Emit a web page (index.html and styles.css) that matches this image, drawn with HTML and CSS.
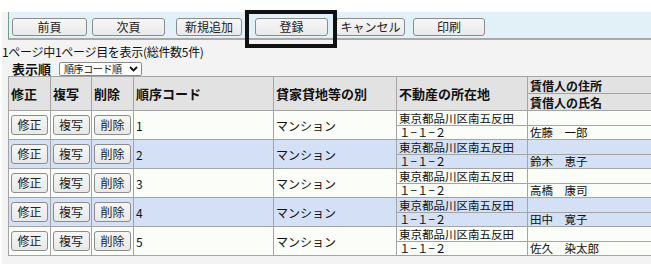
FILE: index.html
```html
<!DOCTYPE html>
<html lang="ja">
<head>
    <meta charset="UTF-8">
    <meta name="viewport" content="width=device-width, initial-scale=1.0">
    <link rel="stylesheet" href="styles.css">
    <title>貸家貸地一覧</title>
</head>
<body>
    <div class="panel">
        <div class="toolbar">
            <button class="tool-btn btn-prev">前頁</button>
            <button class="tool-btn btn-next">次頁</button>
            <button class="tool-btn btn-new">新規追加</button>
            <span class="marked">
                <button class="tool-btn btn-save">登録</button>
            </span>
            <button class="tool-btn btn-cancel">キャンセル</button>
            <button class="tool-btn btn-print">印刷</button>
        </div>

        <div class="page-info">1ページ中1ページ目を表示(総件数5件)</div>

        <div class="sort-row">
            <span class="sort-label">表示順</span>
            <span class="sort-box">
                <select class="sort-select">
                    <option>順序コード順</option>
                </select>
                <svg class="sort-arrow" width="9" height="6" viewBox="0 0 9 6">
                    <path d="M1 1 L4.5 4.5 L8 1" fill="none" stroke="#111" stroke-width="1.8"/>
                </svg>
            </span>
        </div>

        <table class="list">
            <colgroup>
                <col class="c-btn">
                <col class="c-btn2">
                <col class="c-btn">
                <col class="c-code">
                <col class="c-kind">
                <col class="c-addr">
                <col class="c-name">
            </colgroup>
            <thead>
                <tr class="head-top">
                    <th rowspan="2">修正</th>
                    <th rowspan="2">複写</th>
                    <th rowspan="2">削除</th>
                    <th rowspan="2">順序コード</th>
                    <th rowspan="2">貸家貸地等の別</th>
                    <th rowspan="2">不動産の所在地</th>
                    <th class="sub">賃借人の住所</th>
                </tr>
                <tr class="head-bottom">
                    <th class="sub">賃借人の氏名</th>
                </tr>
            </thead>
            <tbody id="rows"></tbody>
        </table>
    </div>

    <script>
        const items = [
            { code: 1, kind: 'マンション', addr1: '東京都品川区南五反田', addr2: '１−１−２', name: '佐藤　一郎' },
            { code: 2, kind: 'マンション', addr1: '東京都品川区南五反田', addr2: '１−１−２', name: '鈴木　恵子' },
            { code: 3, kind: 'マンション', addr1: '東京都品川区南五反田', addr2: '１−１−２', name: '高橋　康司' },
            { code: 4, kind: 'マンション', addr1: '東京都品川区南五反田', addr2: '１−１−２', name: '田中　寛子' },
            { code: 5, kind: 'マンション', addr1: '東京都品川区南五反田', addr2: '１−１−２', name: '佐久　染太郎' }
        ];

        const tbody = document.getElementById('rows');
        let html = '';
        items.forEach((item, i) => {
            const cls = i % 2 === 0 ? 'odd' : 'even';
            html += '<tr class="' + cls + ' row-top">' +
                '<td rowspan="2" class="act"><button class="row-btn">修正</button></td>' +
                '<td rowspan="2" class="act"><button class="row-btn">複写</button></td>' +
                '<td rowspan="2" class="act"><button class="row-btn">削除</button></td>' +
                '<td rowspan="2">' + item.code + '</td>' +
                '<td rowspan="2">' + item.kind + '</td>' +
                '<td class="line">' + item.addr1 + '</td>' +
                '<td class="line"></td>' +
                '</tr>' +
                '<tr class="' + cls + ' row-bottom">' +
                '<td class="line">' + item.addr2 + '</td>' +
                '<td class="line">' + item.name + '</td>' +
                '</tr>';
        });
        tbody.innerHTML = html;
    </script>
</body>
</html>
```

FILE: styles.css
```css
body {
    margin: 0;
    background: #ffffff;
    font-family: "Liberation Sans", "Noto Sans CJK JP", sans-serif;
    font-size: 12px;
    color: #111;
    overflow: hidden;
}

.panel {
    margin: 12px 0 0 2px;
    width: 680px;
    background: #f3f3f3;
    padding-bottom: 8px;
}

/* toolbar */
.toolbar {
    margin-left: 6px;
    height: 28px;
    padding: 6px 0 0 3px;
    box-sizing: border-box;
    background: #e2f1f7;
    border-left: 1px solid #6f9f86;
    border-bottom: 2px solid #a9a9a9;
    display: flex;
    align-items: flex-start;
}

.tool-btn {
    height: 18px;
    padding: 0;
    font-family: "Noto Sans CJK JP", sans-serif;
    font-size: 12px;
    line-height: 16px;
    color: #222;
    background: linear-gradient(#f7f7f7, #e9e9e9);
    border: 1px solid #8c8c8c;
    border-radius: 3px;
    cursor: pointer;
}

.btn-prev { width: 75px; margin-right: 5px; }
.btn-next { width: 73px; margin-right: 11px; }
.btn-new { width: 66px; margin-right: 13px; }
.btn-save { width: 73px; }
.btn-cancel { width: 69px; margin-right: 8px; }
.btn-print { width: 72px; }

.marked {
    position: relative;
    display: inline-block;
    height: 18px;
    margin-right: 8px;
}

.marked::after {
    content: "";
    position: absolute;
    left: -10px;
    top: -8px;
    right: -9px;
    bottom: -12px;
    border: 4px solid #111;
}

.page-info {
    margin-top: 4px;
    height: 16px;
    line-height: 16px;
    font-family: "Noto Sans CJK JP", sans-serif;
    font-size: 12px;
    letter-spacing: -0.3px;
}

.sort-row {
    display: flex;
    align-items: center;
    height: 16px;
    padding-left: 10px;
}

.sort-label {
    font-family: "Noto Sans CJK JP", sans-serif;
    font-weight: bold;
    font-size: 13px;
    width: 47px;
}

.sort-box {
    position: relative;
    display: inline-block;
    margin-top: 2px;
}

.sort-select {
    appearance: none;
    width: 83px;
    height: 14px;
    padding: 0 0 0 4px;
    font-family: "Noto Sans CJK JP", sans-serif;
    font-size: 10px;
    letter-spacing: -0.4px;
    line-height: 12px;
    background: #fff;
    border: 1px solid #8a8a8a;
    border-radius: 2px;
    color: #111;
}

.sort-arrow {
    position: absolute;
    right: 4px;
    top: 4px;
    pointer-events: none;
}

/* list table */
.list {
    margin-left: 6px;
    border-collapse: collapse;
    table-layout: fixed;
    width: 672px;
    font-family: "Noto Sans CJK JP", sans-serif;
    font-size: 12px;
}

.c-btn { width: 42px; }
.c-btn2 { width: 41px; }
.c-code { width: 140px; }
.c-kind { width: 123px; }
.c-addr { width: 131px; }
.c-name { width: 153px; }

.list th,
.list td {
    border: 1px solid #a4a4a4;
    padding: 0 0 0 2px;
    text-align: left;
    white-space: nowrap;
    overflow: hidden;
}

.list th {
    background: #e2e2e2;
    font-size: 13px;
    font-weight: bold;
    line-height: 16px;
}

.head-top,
.head-bottom {
    height: 17px;
}

.list th.sub {
    font-size: 12px;
    line-height: 15px;
}

.odd td {
    background: #fbfdf9;
}

.even td {
    background: #d4e0f5;
}

.row-top {
    height: 15px;
}

.row-bottom {
    height: 14px;
}

.list td.line {
    font-size: 11.5px;
    line-height: 13px;
    height: 13px;
}

.list td.act {
    padding: 0;
    text-align: center;
}

.row-btn {
    width: 37px;
    height: 20px;
    padding: 0;
    font-family: "Noto Sans CJK JP", sans-serif;
    font-size: 12px;
    line-height: 18px;
    color: #222;
    background: linear-gradient(#f6f6f6, #e8e8e8);
    border: 1px solid #8c8c8c;
    border-radius: 3px;
    cursor: pointer;
}
```
